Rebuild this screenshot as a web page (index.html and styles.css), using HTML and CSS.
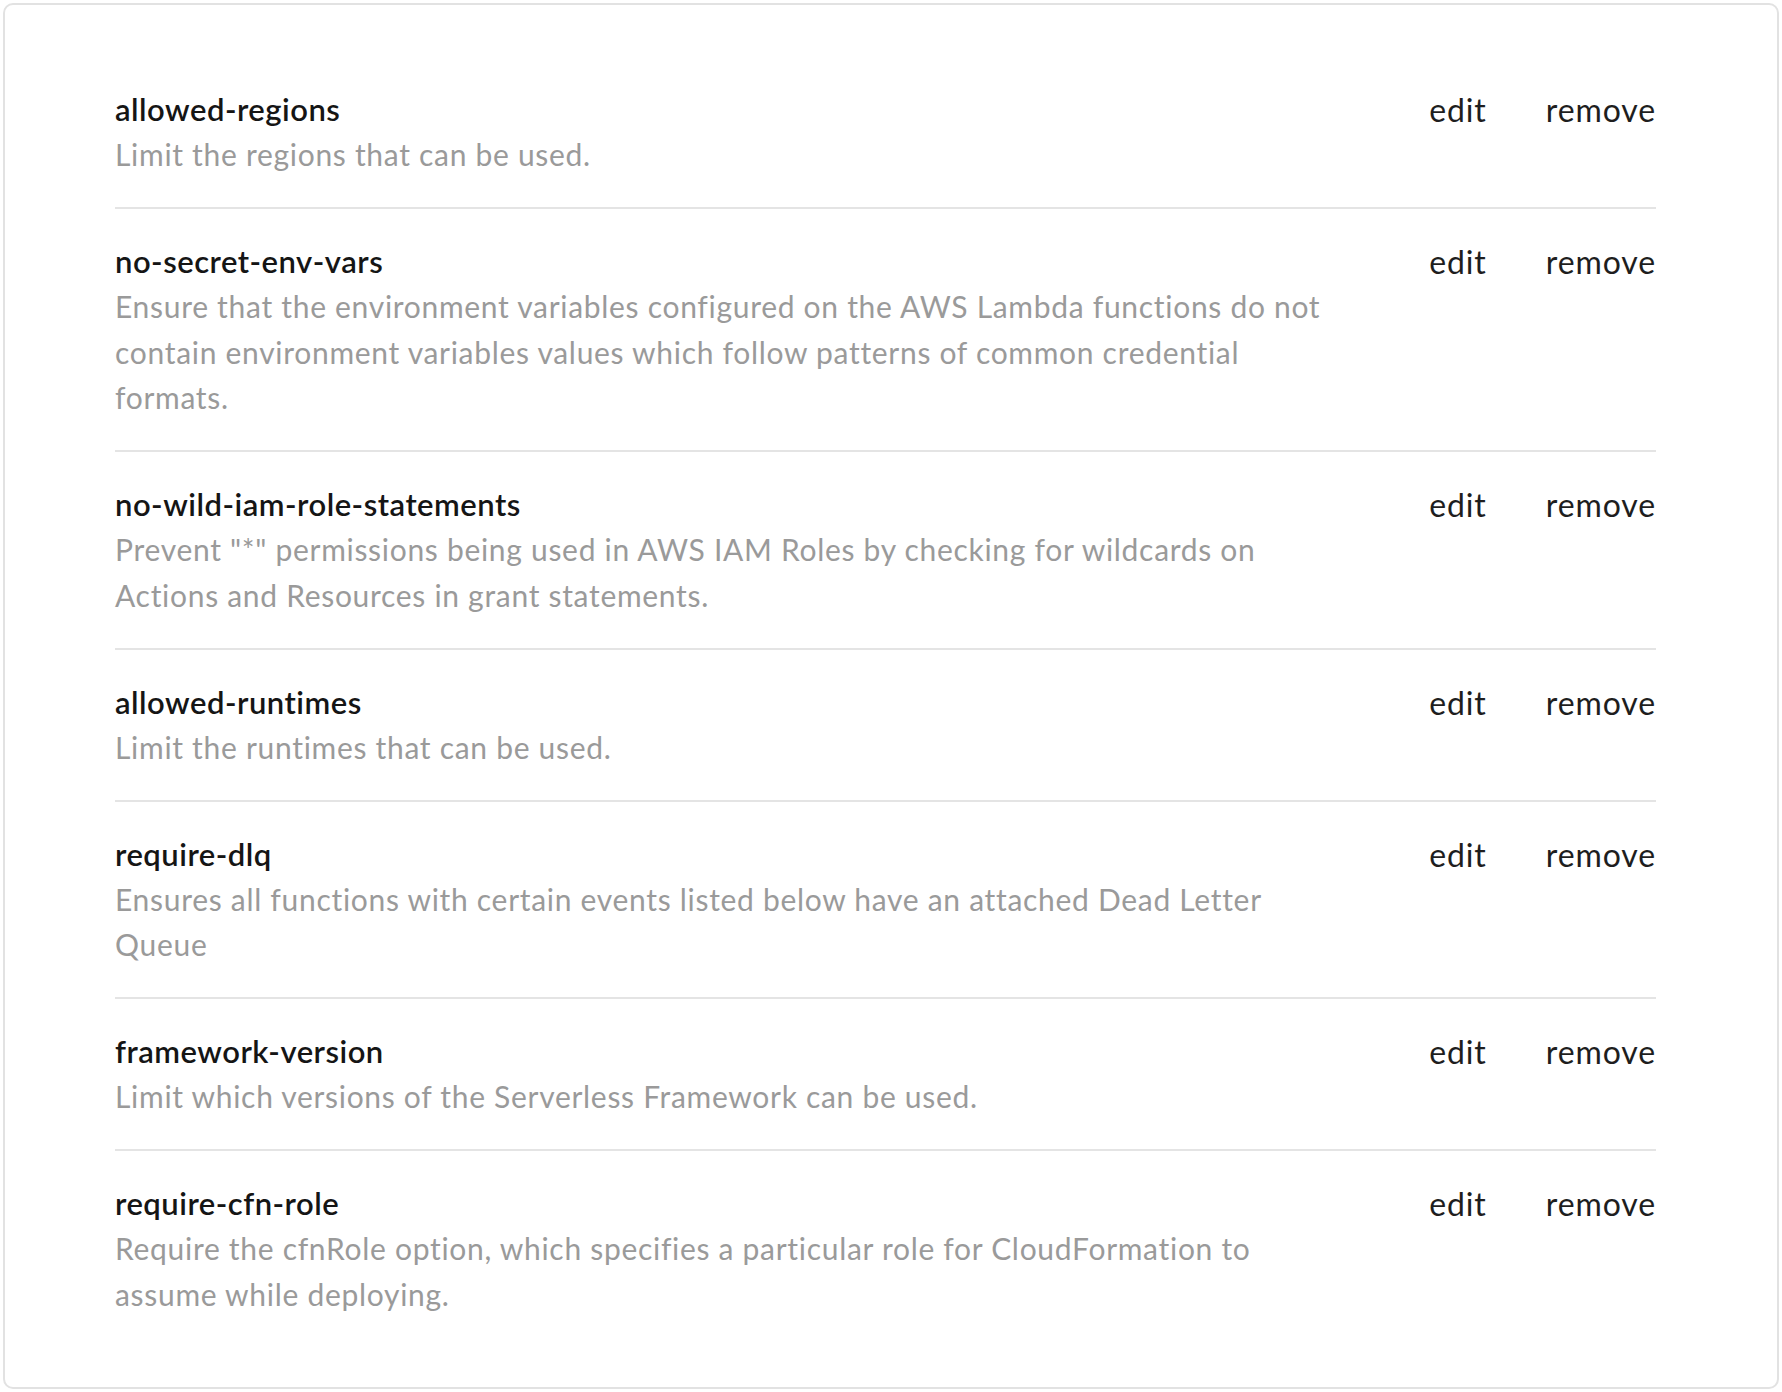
FILE: index.html
```html
<!DOCTYPE html>
<html lang="en">
<head>
<meta charset="utf-8">
<title>Policies</title>
<link rel="stylesheet" href="styles.css">
</head>
<body>
<div class="card">
  <div class="rule">
    <div class="rule-info">
      <div class="rule-name">allowed-regions</div>
      <div class="rule-desc">Limit the regions that can be used.</div>
    </div>
    <div class="rule-actions"><a class="action">edit</a><a class="action">remove</a></div>
  </div>
  <div class="rule">
    <div class="rule-info">
      <div class="rule-name">no-secret-env-vars</div>
      <div class="rule-desc">Ensure that the environment variables configured on the AWS Lambda functions do not contain environment variables values which follow patterns of common credential formats.</div>
    </div>
    <div class="rule-actions"><a class="action">edit</a><a class="action">remove</a></div>
  </div>
  <div class="rule">
    <div class="rule-info">
      <div class="rule-name">no-wild-iam-role-statements</div>
      <div class="rule-desc">Prevent "*" permissions being used in AWS IAM Roles by checking for wildcards on Actions and Resources in grant statements.</div>
    </div>
    <div class="rule-actions"><a class="action">edit</a><a class="action">remove</a></div>
  </div>
  <div class="rule">
    <div class="rule-info">
      <div class="rule-name">allowed-runtimes</div>
      <div class="rule-desc">Limit the runtimes that can be used.</div>
    </div>
    <div class="rule-actions"><a class="action">edit</a><a class="action">remove</a></div>
  </div>
  <div class="rule">
    <div class="rule-info">
      <div class="rule-name">require-dlq</div>
      <div class="rule-desc">Ensures all functions with certain events listed below have an attached Dead Letter Queue</div>
    </div>
    <div class="rule-actions"><a class="action">edit</a><a class="action">remove</a></div>
  </div>
  <div class="rule">
    <div class="rule-info">
      <div class="rule-name">framework-version</div>
      <div class="rule-desc">Limit which versions of the Serverless Framework can be used.</div>
    </div>
    <div class="rule-actions"><a class="action">edit</a><a class="action">remove</a></div>
  </div>
  <div class="rule">
    <div class="rule-info">
      <div class="rule-name">require-cfn-role</div>
      <div class="rule-desc">Require the cfnRole option, which specifies a particular role for CloudFormation to assume while deploying.</div>
    </div>
    <div class="rule-actions"><a class="action">edit</a><a class="action">remove</a></div>
  </div>
</div>
</body>
</html>
```
FILE: styles.css
```css
html, body {
  background: #ffffff;
}
body {
  margin: 3px;
  font-family: "Lato", "Open Sans", sans-serif;
  -webkit-font-smoothing: antialiased;
}
.card {
  border: 2px solid #e2e2e2;
  border-radius: 10px;
  background: #fff;
  padding: 52px 121px 40px 110px;
}
.rule {
  display: flex;
  align-items: flex-start;
  padding: 30px 0 29.5px;
  border-bottom: 2px solid #e4e4e4;
}
.rule:last-child {
  border-bottom: none;
}
.rule-info {
  width: 1220px;
  flex: 0 0 1220px;
}
.rule-name {
  font-size: 31px;
  line-height: 45px;
  font-weight: 600;
  letter-spacing: 0.5px;
  color: #151515;
}
.rule-desc {
  font-size: 30px;
  line-height: 45.5px;
  font-weight: 400;
  letter-spacing: 0.7px;
  color: #9a9a9a;
}
.rule-actions {
  margin-left: auto;
  display: flex;
  gap: 59px;
  padding-top: 0;
}
.action {
  font-size: 32px;
  line-height: 45px;
  letter-spacing: 0.9px;
  color: #1e1e1e;
  cursor: pointer;
}
```
